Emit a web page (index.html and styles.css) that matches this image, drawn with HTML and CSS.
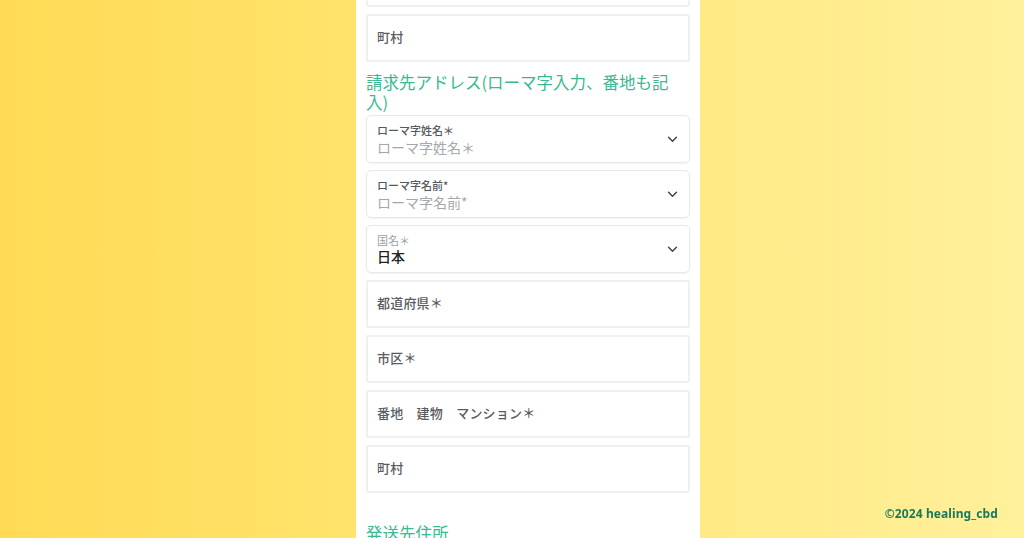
FILE: index.html
```html
<!DOCTYPE html>
<html lang="ja">
<head>
<meta charset="utf-8">
<link rel="stylesheet" href="styles.css">
</head>
<body>
<div class="layout">
  <div class="side"></div>
  <main class="panel">
    <div class="form">
      <div class="input first"><span class="ph"></span></div>
      <div class="input"><span class="ph">町村</span></div>
      <h2 class="heading">請求先アドレス(ローマ字入力、番地も記入)</h2>
      <div class="select">
        <div class="sel-text">
          <span class="sel-label">ローマ字姓名＊</span>
          <span class="sel-value muted">ローマ字姓名＊</span>
        </div>
        <svg class="chev" viewBox="0 0 12 8" width="11" height="7"><path d="M1.5 1.5 L6 6 L10.5 1.5" fill="none" stroke="#444" stroke-width="1.7" stroke-linecap="round" stroke-linejoin="round"/></svg>
      </div>
      <div class="select">
        <div class="sel-text">
          <span class="sel-label">ローマ字名前*</span>
          <span class="sel-value muted">ローマ字名前*</span>
        </div>
        <svg class="chev" viewBox="0 0 12 8" width="11" height="7"><path d="M1.5 1.5 L6 6 L10.5 1.5" fill="none" stroke="#444" stroke-width="1.7" stroke-linecap="round" stroke-linejoin="round"/></svg>
      </div>
      <div class="select">
        <div class="sel-text">
          <span class="sel-label light">国名＊</span>
          <span class="sel-value">日本</span>
        </div>
        <svg class="chev" viewBox="0 0 12 8" width="11" height="7"><path d="M1.5 1.5 L6 6 L10.5 1.5" fill="none" stroke="#444" stroke-width="1.7" stroke-linecap="round" stroke-linejoin="round"/></svg>
      </div>
      <div class="input"><span class="ph">都道府県＊</span></div>
      <div class="input"><span class="ph">市区＊</span></div>
      <div class="input"><span class="ph">番地　建物　マンション＊</span></div>
      <div class="input"><span class="ph">町村</span></div>
      <h2 class="heading second">発送先住所</h2>
    </div>
  </main>
  <div class="side"></div>
</div>
<footer class="copy">©2024 healing_cbd</footer>
</body>
</html>
```
FILE: styles.css
```css
* { box-sizing: border-box; }
html, body { margin: 0; padding: 0; height: 100%; overflow: hidden; }
body {
  background: linear-gradient(90deg, #ffdb55 0%, #ffe36c 35%, #fff09b 100%);
  font-family: "Noto Sans CJK JP", "Noto Sans", sans-serif;
}
.layout {
  display: grid;
  grid-template-columns: 356px 344px 1fr;
  height: 100vh;
}
.panel {
  background: #fff;
  height: 100%;
  padding: 0 10px;
  overflow: hidden;
}
.form {
  display: flex;
  flex-direction: column;
  gap: 7px;
  margin-top: -41px;
}
.input {
  height: 48px;
  border: 2px solid #eef0f3;
  border-radius: 2px;
  display: flex;
  align-items: center;
  padding: 0 9px 3px;
}
.ph {
  font-size: 13px;
  font-weight: 500;
  color: #585c61;
  letter-spacing: 0.2px;
}
.heading {
  margin: 3px 0 -4px;
  padding-right: 14px;
  font-size: 16.5px;
  line-height: 20px;
  font-weight: 400;
  color: #38b893;
}
.heading.second { margin-top: 23px; }
.select {
  height: 48px;
  border: 1px solid #e6e8eb;
  border-radius: 5px;
  box-shadow: 0 1px 2px rgba(0,0,0,0.05);
  display: flex;
  align-items: center;
  justify-content: space-between;
  padding: 0 11px 0 10px;
}
.sel-text {
  display: flex;
  flex-direction: column;
  line-height: 1;
}
.sel-label {
  font-size: 11px;
  font-weight: 500;
  color: #555a60;
  margin-bottom: 4px;
}
.sel-label.light { color: #9aa0a6; font-weight: 400; margin-bottom: 3px; }
.sel-value {
  font-size: 14px;
  color: #222;
  font-weight: 500;
}
.sel-value.muted { color: #a3a8ae; font-weight: 400; }
.chev { display: block; }
.copy {
  position: fixed;
  right: 26px;
  bottom: 16px;
  font-family: "Noto Sans", sans-serif;
  font-weight: 700;
  font-size: 12px;
  color: #18795c;
  letter-spacing: 0.1px;
}
```
